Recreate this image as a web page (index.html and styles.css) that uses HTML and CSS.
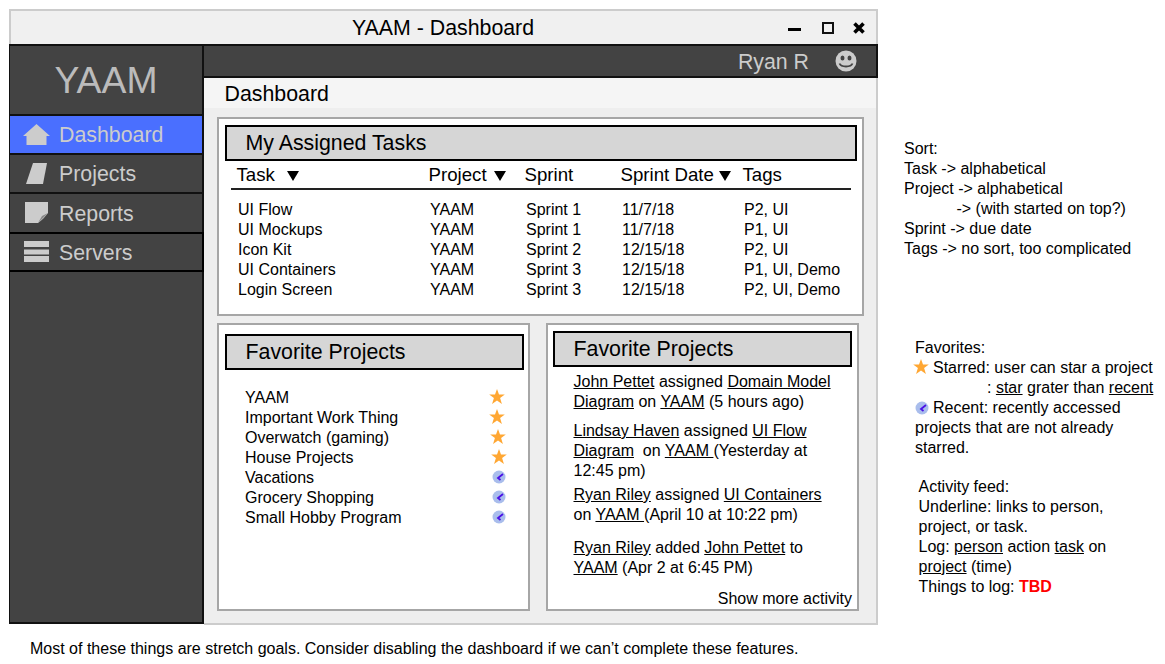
FILE: index.html
```html
<!DOCTYPE html>
<html lang="en">
<head>
<meta charset="utf-8">
<title>YAAM - Dashboard</title>
<link rel="stylesheet" href="styles.css">
</head>
<body>
<div class="page">
  <div class="window">
    <header class="titlebar">
      <span class="title">YAAM - Dashboard</span>
      <div class="controls">
        <span class="ctl-min"></span>
        <span class="ctl-max"></span>
        <svg class="ctl-close" width="14" height="14" viewBox="0 0 14 14"><path d="M2.5 2.5 11.5 11.5M11.5 2.5 2.5 11.5" stroke="#000" stroke-width="3.6" fill="none"/></svg>
      </div>
    </header>
    <div class="app">
      <aside class="sidebar">
        <div class="brand">YAAM</div>
        <nav class="nav">
          <a class="nav-item active">
            <svg class="nav-icon" width="28" height="22" viewBox="0 0 28 22"><path d="M13.5 0 27 12H23.5V21H3.5V12H0Z" fill="#ccc"/></svg>
            <span>Dashboard</span>
          </a>
          <a class="nav-item">
            <svg class="nav-icon" width="28" height="22" viewBox="0 0 28 22"><path d="M10 0H24L20 21H3Z" fill="#ccc"/></svg>
            <span>Projects</span>
          </a>
          <a class="nav-item low">
            <svg class="nav-icon" width="28" height="22" viewBox="0 0 28 22"><path d="M2 0H25V11C22 15 19 18 15 21H2Z" fill="#ccc"/><path d="M25 11 19 14 15 21Z" fill="#888"/></svg>
            <span>Reports</span>
          </a>
          <a class="nav-item low wide">
            <svg class="nav-icon" width="28" height="22" viewBox="0 0 28 22"><path d="M1 0H26V6H1ZM1 8.500H26V13.500H1ZM1 15H26V21H1Z" fill="#ccc"/></svg>
            <span>Servers</span>
          </a>
        </nav>
      </aside>
      <div class="main">
        <div class="userbar">
          <span class="username">Ryan R</span>
          <svg width="22" height="22" viewBox="0 0 22 22"><circle cx="11" cy="11" r="10.500" fill="#ccc"/><ellipse cx="7.500" cy="8" rx="2" ry="2.600" fill="#444"/><ellipse cx="14.500" cy="8" rx="2" ry="2.600" fill="#444"/><path d="M4.500 13.500C6 17.500 16 17.500 17.500 13.500" stroke="#444" stroke-width="1.800" fill="none"/></svg>
        </div>
        <div class="pagehead">Dashboard</div>
        <div class="content">
          <section class="panel tasks">
            <h2 class="panel-title">My Assigned Tasks</h2>
            <div class="task-head">
              <span>Task <i class="sort task-sort"></i></span>
              <span>Project <i class="sort"></i></span>
              <span>Sprint</span>
              <span>Sprint Date <i class="sort date-sort"></i></span>
              <span>Tags</span>
            </div>
            <div class="task-rows">
              <span>UI Flow</span><span>YAAM</span><span>Sprint 1</span><span>11/7/18</span><span>P2, UI</span>
              <span>UI Mockups</span><span>YAAM</span><span>Sprint 1</span><span>11/7/18</span><span>P1, UI</span>
              <span>Icon Kit</span><span>YAAM</span><span>Sprint 2</span><span>12/15/18</span><span>P2, UI</span>
              <span>UI Containers</span><span>YAAM</span><span>Sprint 3</span><span>12/15/18</span><span>P1, UI, Demo</span>
              <span>Login Screen</span><span>YAAM</span><span>Sprint 3</span><span>12/15/18</span><span>P2, UI, Demo</span>
            </div>
          </section>
          <div class="lower">
            <section class="panel favorites">
              <h2 class="panel-title">Favorite Projects</h2>
              <ul class="fav-list">
                <li>YAAM<svg class="star s0" width="16" height="16" viewBox="0 0 16 16"><use href="#star"/></svg></li>
                <li>Important Work Thing<svg class="star s0" width="16" height="16" viewBox="0 0 16 16"><use href="#star"/></svg></li>
                <li>Overwatch (gaming)<svg class="star s1" width="16" height="16" viewBox="0 0 16 16"><use href="#star"/></svg></li>
                <li>House Projects<svg class="star s2" width="16" height="16" viewBox="0 0 16 16"><use href="#star"/></svg></li>
                <li>Vacations<svg class="recent" width="14" height="14" viewBox="0 0 14 14"><use href="#recent"/></svg></li>
                <li>Grocery Shopping<svg class="recent" width="14" height="14" viewBox="0 0 14 14"><use href="#recent"/></svg></li>
                <li>Small Hobby Program<svg class="recent" width="14" height="14" viewBox="0 0 14 14"><use href="#recent"/></svg></li>
              </ul>
            </section>
            <section class="panel activity">
              <h2 class="panel-title">Favorite Projects</h2>
              <div class="feed">
                <p><u>John Pettet</u> assigned <u>Domain Model Diagram</u> on <u>YAAM</u> (5 hours ago)</p>
                <p><u>Lindsay Haven</u> assigned <u>UI Flow Diagram</u>&nbsp; on <u>YAAM </u>(Yesterday at 12:45 pm)</p>
                <p><u>Ryan Riley</u> assigned <u>UI Containers</u> on <u>YAAM </u>(April 10 at 10:22 pm)</p>
                <p><u>Ryan Riley</u> added <u>John Pettet</u> to <u>YAAM</u> (Apr 2 at 6:45 PM)</p>
              </div>
              <div class="more">Show more activity</div>
            </section>
          </div>
        </div>
      </div>
    </div>
  </div>
  <aside class="notes">
    <div class="note note-sort">
      Sort:<br>
      Task -&gt; alphabetical<br>
      Project -&gt; alphabetical<br>
      <span class="indent-a">-&gt; (with started on top?)</span><br>
      Sprint -&gt; due date<br>
      Tags -&gt; no sort, too complicated
    </div>
    <div class="note note-fav">
      Favorites:<br>
      <svg class="note-star" width="16" height="16" viewBox="0 0 16 16"><use href="#star"/></svg>Starred: user can star a project<br>
      <span class="indent-b">: <u>star</u> grater than <u>recent</u></span><br>
      <svg class="note-recent" width="14" height="14" viewBox="0 0 14 14"><use href="#recent"/></svg>Recent: recently accessed<br>
      projects that are not already<br>
      starred.
    </div>
    <div class="note note-log">
      Activity feed:<br>
      Underline: links to person,<br>
      project, or task.<br>
      Log: <u>person</u> action <u>task</u> on<br>
      <u>project</u> (time)<br>
      Things to log: <b class="tbd">TBD</b>
    </div>
  </aside>
  <p class="footnote">Most of these things are stretch goals. Consider disabling the dashboard if we can’t complete these features.</p>
</div>
<svg class="defs" width="0" height="0">
  <defs>
    <path id="star" d="M8 0 10 5.600H15.800L11.100 9.100 12.900 15 8 11.400 3.100 15 4.900 9.100 .2 5.600H6Z" fill="#ffa733"/>
    <g id="recent"><circle cx="7" cy="7" r="6.500" fill="#a9bdec"/><path d="M11 4 6 8 8.500 10" stroke="#4a10e6" stroke-width="1.800" fill="none"/></g>
  </defs>
</svg>
</body>
</html>
```
FILE: styles.css
```css
* { box-sizing: border-box; }
html, body { margin: 0; padding: 0; background: #fff; }
body {
  font-family: "Liberation Sans", Arial, sans-serif;
  font-size: 16px;
  line-height: 20px;
  color: #000;
  overflow: hidden;
}
.page {
  width: 1165px;
  height: 664px;
  display: grid;
  grid-template-columns: 869px 1fr;
  grid-template-rows: 615px 1fr;
  padding: 9px 0 0 9px;
}
.window { display: flex; flex-direction: column; min-height: 0; }
.titlebar {
  height: 35px;
  flex: none;
  background: #f0f0f0;
  border: 2px solid #ccc;
  border-bottom: 0;
  display: flex;
  align-items: center;
  justify-content: center;
  position: relative;
  font-size: 21.33px;
}
.title { margin-right: 1px; }
.controls {
  position: absolute;
  top: 0;
  right: 0;
  height: 33px;
  display: flex;
  align-items: center;
}
.ctl-min { width: 13px; height: 3px; background: #000; margin: 4px 21px 0 0; }
.ctl-max { width: 12px; height: 12px; border: 2px solid #111; margin: 0 18px 0 0; }
.ctl-close { margin: 0 10px 0 0; }

.app { flex: 1; display: flex; min-height: 0; }
.sidebar {
  width: 195px;
  flex: none;
  background: #434343;
  border: 2px solid #111;
  border-left-width: 1px;
  color: #ccc;
  display: flex;
  flex-direction: column;
}
.brand { height: 68px; font-size: 37.33px; line-height: 68px; text-align: center; color: #bbb; }
.nav { display: flex; flex-direction: column; }
.nav-item {
  height: 39px;
  display: flex;
  align-items: center;
  gap: 8px;
  padding-left: 13px;
  font-size: 21.33px;
  border-top: 2px solid #111;
}
.nav-item.active { background: #4a6fff; }
.nav-item.low { height: 40px; }
.nav-item.low span { margin-top: 2px; }
.nav-item.wide { width: 194px; border: 2px solid #000; border-left: 0; }
.nav-icon { flex: none; }

.main { flex: 1; min-width: 0; display: flex; flex-direction: column; }
.userbar {
  height: 34px;
  flex: none;
  background: #434343;
  border: solid #111;
  border-width: 2px 2px 2px 0;
  color: #ccc;
  font-size: 21.33px;
  display: flex;
  align-items: center;
  justify-content: flex-end;
  gap: 26px;
  padding-right: 19px;
}
.username { margin-top: 2px; }
.pagehead {
  height: 30px;
  flex: none;
  background: #f5f5f5;
  border-right: 2px solid #ccc;
  font-size: 21.33px;
  line-height: 32px;
  padding-left: 20.5px;
}
.content {
  flex: 1;
  background: #eee;
  border: solid #ccc;
  border-width: 0 2px 2px 0;
  padding: 9px 12px 12px 13px;
  display: flex;
  flex-direction: column;
  gap: 7px;
}
.panel { background: #fff; border: 2px solid #a6a6a6; position: relative; }
.panel-title {
  margin: 0;
  height: 36px;
  background: #d6d6d6;
  border: 2px solid #000;
  font-weight: 400;
  font-size: 21.33px;
  line-height: 33px;
  padding-left: 18.5px;
}
.tasks { height: 199px; padding: 6px 5px 0 6px; }
.task-head, .task-rows {
  display: grid;
  grid-template-columns: 192px 96px 96px 122px 1fr;
}
.task-head {
  margin: 0 0 0 6px;
  padding-left: 5.5px;
  width: 620px;
  height: 29px;
  border-bottom: 2px solid #222;
  font-size: 18.67px;
  line-height: 28px;
  white-space: nowrap;
}
.task-rows { padding: 10px 0 0 13px; }
.sort {
  display: inline-block;
  width: 0;
  height: 0;
  border: solid transparent;
  border-width: 10px 6px 0;
  border-top-color: #000;
  margin-left: 2px;
}
.task-sort { margin-left: 7px; }
.date-sort { margin-left: 0; }
.lower { display: flex; gap: 16px; flex: 1; min-height: 0; }
.favorites, .activity { width: 313px; height: 288px; }
.favorites { padding: 9px 4px 0 6px; }
.activity { padding: 6px 5px 0 5px; }
.fav-list { list-style: none; margin: 0; padding: 18px 16px 0 20px; }
.fav-list li { display: flex; justify-content: space-between; align-items: center; height: 20px; }
.star, .recent { position: relative; top: -1px; }
.star.s0 { margin-right: 3px; }
.star.s1 { margin-right: 2px; }
.star.s2 { margin-right: 1.5px; }
.recent { margin-right: 2px; }
.feed { padding: 5px 0 0 20.5px; width: 282px; }
.feed p { margin: 0; }
.feed p + p { margin-top: 9px; }
.feed p:nth-child(3) { margin-top: 4px; }
.feed p:nth-child(4) { margin-top: 13px; }
.more { position: absolute; right: 5px; bottom: 0; }

.notes { padding: 130px 0 0 26px; display: flex; flex-direction: column; white-space: nowrap; }
.note-fav { margin: 79px 0 0 11px; }
.note-log { margin: 19px 0 0 14.5px; }
.indent-a { margin-left: 52.5px; }
.indent-b { margin-left: 72px; }
.note-star { vertical-align: -2px; margin: 0 4px 0 -2px; }
.note-recent { vertical-align: -2px; margin: 0 4px 0 0; }
.tbd { color: #f00; }
.footnote { grid-column: 1 / -1; margin: 15px 0 0 21px; }
.defs { position: absolute; }
```
